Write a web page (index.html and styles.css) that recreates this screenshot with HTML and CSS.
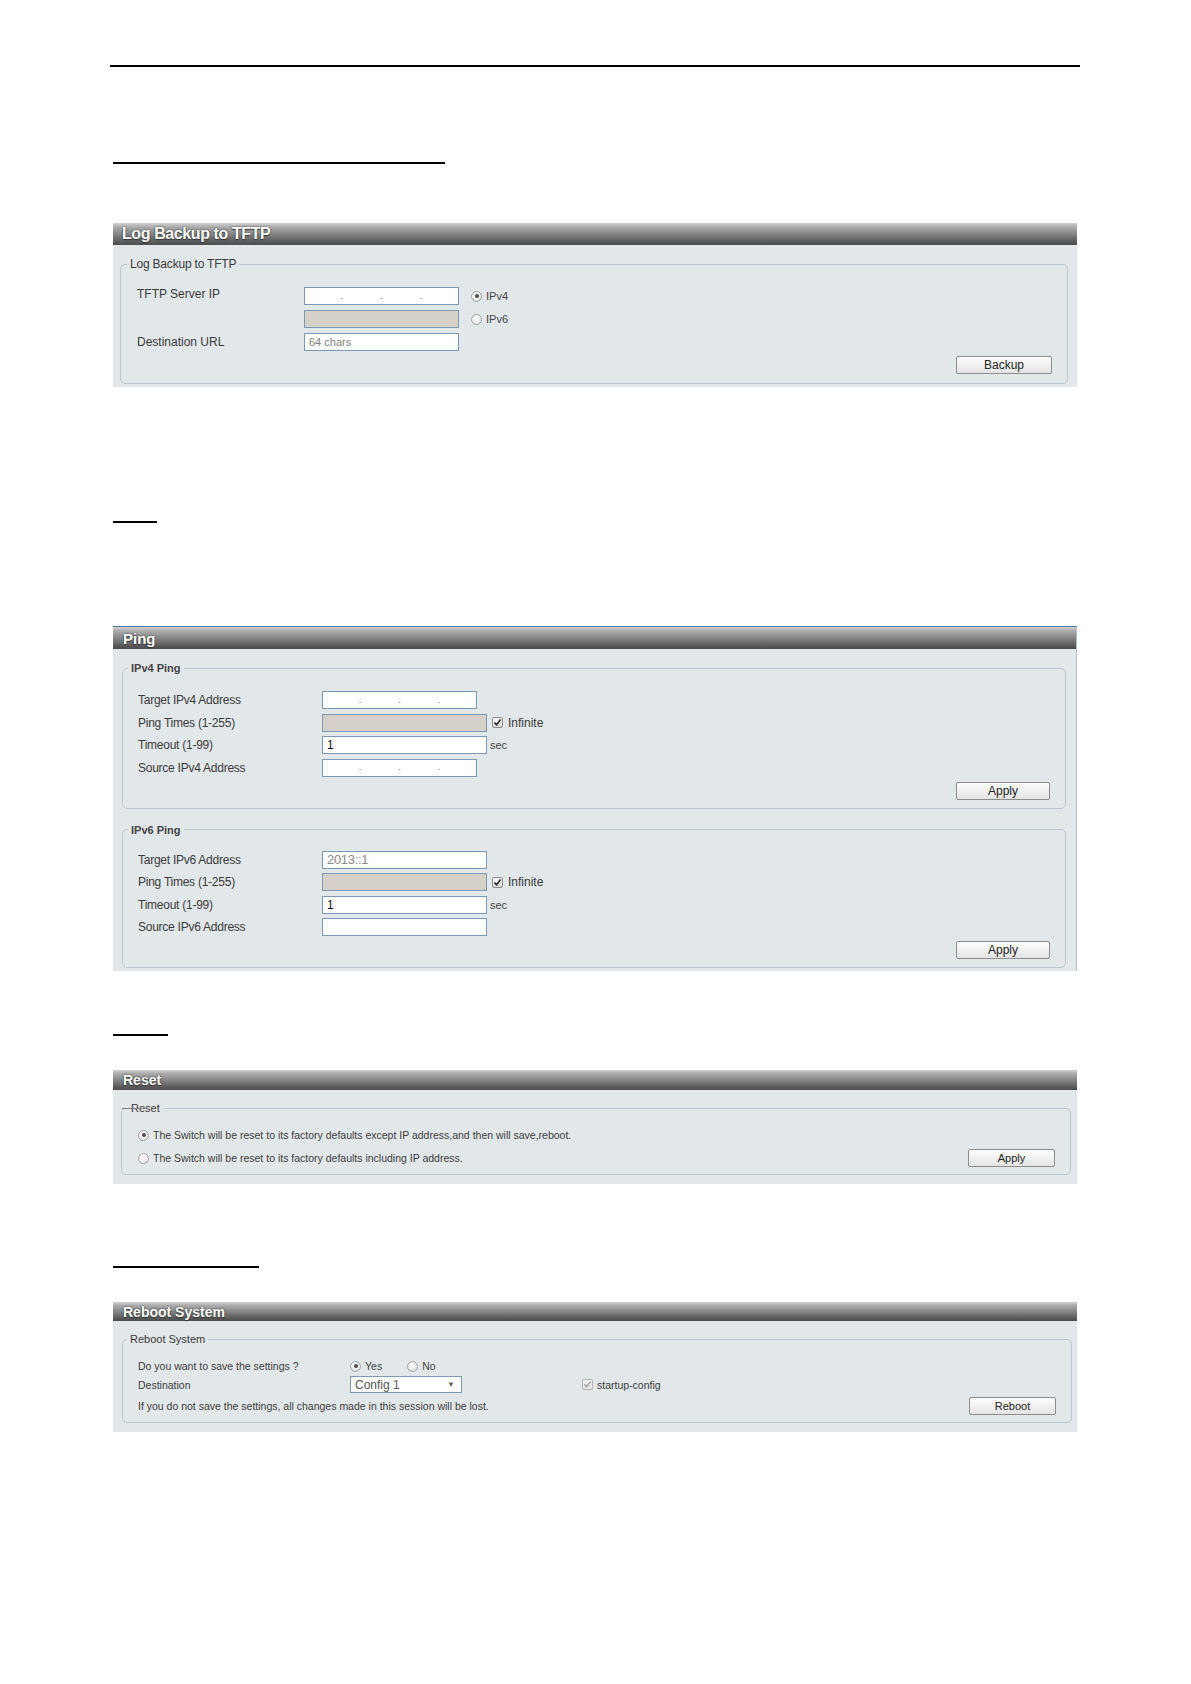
FILE: index.html
```html
<!DOCTYPE html>
<html>
<head>
<meta charset="utf-8">
<title>Tools</title>
<link rel="stylesheet" href="styles.css">
</head>
<body>
<div class="page">
  <div class="top-rule"></div>
  <div class="uline u1"></div>

  <section class="panel p-log">
    <div class="bar">Log Backup to TFTP</div>
    <div class="body">
      <fieldset>
        <legend>Log Backup to TFTP</legend>
        <div class="fs-in">
          <div class="form form-log">
            <div class="lbl lbl-up">TFTP Server IP</div>
            <div class="inp ip"><span class="seg"></span><span class="dot">.</span><span class="seg"></span><span class="dot">.</span><span class="seg"></span><span class="dot">.</span><span class="seg"></span></div>
            <div class="opt"><span class="radio on"></span>IPv4</div>
            <div></div>
            <div class="inp dis"></div>
            <div class="opt"><span class="radio"></span>IPv6</div>
            <div class="lbl">Destination URL</div>
            <div class="inp ph">64 chars</div>
            <div></div>
          </div>
          <div class="btnrow"><button class="btn btn-wide">Backup</button></div>
        </div>
      </fieldset>
    </div>
  </section>

  <div class="uline u2"></div>

  <section class="panel p-ping">
    <div class="bar">Ping</div>
    <div class="body">
      <fieldset class="fs-v4">
        <legend>IPv4 Ping</legend>
        <div class="fs-in">
          <div class="form form-ping">
            <div class="lbl">Target IPv4 Address</div>
            <div class="field"><div class="inp ip ip-short"><span class="seg"></span><span class="dot">.</span><span class="seg"></span><span class="dot">.</span><span class="seg"></span><span class="dot">.</span><span class="seg"></span></div></div>
            <div class="lbl">Ping Times (1-255)</div>
            <div class="field"><div class="inp dis long"></div><span class="check"><svg width="9" height="9" viewBox="0 0 9 9"><path d="M1.5 4.6 L3.6 6.8 L7.6 1.6" fill="none" stroke="#2b2b2b" stroke-width="1.6"/></svg></span><span class="aside">Infinite</span></div>
            <div class="lbl">Timeout (1-99)</div>
            <div class="field"><div class="inp long val">1</div><span class="unit">sec</span></div>
            <div class="lbl">Source IPv4 Address</div>
            <div class="field"><div class="inp ip ip-short"><span class="seg"></span><span class="dot">.</span><span class="seg"></span><span class="dot">.</span><span class="seg"></span><span class="dot">.</span><span class="seg"></span></div></div>
          </div>
          <div class="btnrow"><button class="btn">Apply</button></div>
        </div>
      </fieldset>

      <fieldset class="fs-v6">
        <legend>IPv6 Ping</legend>
        <div class="fs-in">
          <div class="form form-ping">
            <div class="lbl">Target IPv6 Address</div>
            <div class="field"><div class="inp long ph ph-big">2013::1</div></div>
            <div class="lbl">Ping Times (1-255)</div>
            <div class="field"><div class="inp dis long"></div><span class="check"><svg width="9" height="9" viewBox="0 0 9 9"><path d="M1.5 4.6 L3.6 6.8 L7.6 1.6" fill="none" stroke="#2b2b2b" stroke-width="1.6"/></svg></span><span class="aside">Infinite</span></div>
            <div class="lbl">Timeout (1-99)</div>
            <div class="field"><div class="inp long val">1</div><span class="unit">sec</span></div>
            <div class="lbl">Source IPv6 Address</div>
            <div class="field"><div class="inp long"></div></div>
          </div>
          <div class="btnrow"><button class="btn">Apply</button></div>
        </div>
      </fieldset>
    </div>
  </section>

  <div class="uline u3"></div>

  <section class="panel p-reset">
    <div class="bar">Reset</div>
    <div class="body">
      <fieldset>
        <legend class="struck">Reset</legend>
        <div class="fs-in">
          <div class="rrow r1"><span class="radio on"></span><span class="rtext">The Switch will be reset to its factory defaults except IP address,and then will save,reboot.</span></div>
          <div class="rrow r2"><span class="radio"></span><span class="rtext">The Switch will be reset to its factory defaults including IP address.</span><button class="btn btn-reset">Apply</button></div>
        </div>
      </fieldset>
    </div>
  </section>

  <div class="uline u4"></div>

  <section class="panel p-reboot">
    <div class="bar">Reboot System</div>
    <div class="body">
      <fieldset>
        <legend>Reboot System</legend>
        <div class="fs-in">
          <div class="brow b1">
            <span class="blbl">Do you want to save the settings ?</span>
            <span class="opt2"><span class="radio on"></span>Yes</span>
            <span class="opt2"><span class="radio"></span>No</span>
          </div>
          <div class="brow b2">
            <span class="blbl">Destination</span>
            <span class="select">Config 1<span class="arrow">&#9660;</span></span>
            <span class="check dim"><svg width="9" height="9" viewBox="0 0 9 9"><path d="M1.5 4.6 L3.6 6.8 L7.6 1.6" fill="none" stroke="#9a9a9a" stroke-width="1.4"/></svg></span>
            <span class="aside2">startup-config</span>
          </div>
          <div class="brow b3">
            <span class="note">If you do not save the settings, all changes made in this session will be lost.</span>
            <button class="btn btn-reboot">Reboot</button>
          </div>
        </div>
      </fieldset>
    </div>
  </section>
</div>
</body>
</html>
```

FILE: styles.css
```css
* { box-sizing: border-box; }
html, body { margin: 0; padding: 0; background: #fff; }
body {
  font-family: "Liberation Sans", Arial, "DejaVu Sans", sans-serif;
  color: #3a3a3a;
  width: 1191px;
  height: 1684px;
  overflow: hidden;
}
.page { padding: 65px 0 0 113px; }

.top-rule { height: 2px; width: 970px; margin-left: -3px; background: #000; }
.uline { height: 2px; background: #000; }
.u1 { width: 332px; margin-top: 95px; }
.u2 { width: 44px; margin-top: 134px; }
.u3 { width: 55px; margin-top: 63px; }
.u4 { width: 146px; margin-top: 82px; }

.panel { width: 964px; background: #e2e7ea; }
.p-log { margin-top: 59px; }
.p-ping { margin-top: 103px; border-top: 1px solid #4e759b; border-right: 1px solid #a9c2d6; }
.p-reset { margin-top: 34px; }
.p-reboot { margin-top: 34px; }

.bar {
  display: flex;
  align-items: center;
  padding-left: 10px;
  color: #fff;
  font-weight: bold;
  background: linear-gradient(#d2d2d2 0%, #acacac 18%, #808080 55%, #5a5a5a 85%, #4c4c4c 100%);
  text-shadow: 0 0 2px #3a3a3a, 0 1px 1px #333;
}
.p-log .bar { height: 22px; font-size: 16px; letter-spacing: -0.4px; padding-left: 9px; }
.p-ping .bar { height: 22px; font-size: 15px; }
.p-reset .bar { height: 20px; font-size: 14px; }
.p-reboot .bar { height: 19px; font-size: 14px; }

.p-log .body { padding: 12px 9px 3px 7px; }
.p-ping .body { padding: 12px 10px 3px 9px; }
.p-reset .body { padding: 12px 6px 9px 8px; }
.p-reboot .body { padding: 12px 5px 9px 9px; }

fieldset {
  margin: 0;
  padding: 0;
  min-width: 0;
  border: 1px solid #bcc7cf;
  border-radius: 5px;
}
legend { padding: 0 3px; margin-left: 6px; color: #3a3a3a; }
.p-log legend { font-size: 12px; line-height: 14px; letter-spacing: -0.2px; }
.p-ping legend { font-size: 11px; line-height: 14px; font-weight: bold; margin-left: 5px; color: #444; }
.p-reset legend, .p-reboot legend { font-size: 11px; line-height: 12px; }
.p-reboot legend { margin-left: 4px; }
.fs-v6 { margin-top: 14px; }

legend.struck { position: relative; margin-left: 6px; padding: 0 4px 0 3px; }
legend.struck::before {
  content: "";
  position: absolute;
  left: -6px;
  top: 6px;
  width: 22px;
  height: 1px;
  background: #7d7d7d;
}

.p-log .fs-in { padding: 16px 15px 9px 16px; }
.fs-v4 .fs-in { padding: 16px 15px 8px 15px; }
.fs-v6 .fs-in { padding: 14px 15px 8px 15px; }
.p-reset .fs-in { padding: 14px 15px 7px 16px; }
.p-reboot .fs-in { padding: 14px 15px 7px 15px; }

.form { display: grid; grid-auto-rows: 18px; align-items: center; }
.form-log { grid-template-columns: 167px 155px auto; row-gap: 5px; }
.form-ping { grid-template-columns: 184px auto; row-gap: 4.5px; }

.lbl { font-size: 12px; line-height: 14px; white-space: nowrap; }
.lbl-up { margin-top: -5px; }
.form-ping .lbl { letter-spacing: -0.25px; }

.inp {
  height: 18px;
  border: 1px solid #7b99b4;
  background: #fff;
  display: flex;
  align-items: center;
  padding-left: 4px;
  font-size: 12px;
  color: #111;
  white-space: nowrap;
}
.inp.dis { background: #d5d1c9; }
.inp.ph { color: #7f7f7f; font-size: 11px; }
.inp.ph-big { font-size: 13px; color: #8a8a8a; letter-spacing: -0.3px; }
.inp.val { font-size: 12px; }
.inp.long { width: 165px; }
.ip-short { width: 155px; }
.ip { padding-left: 0; }
.ip .seg { width: 35px; }
.ip .dot { width: 5px; text-align: center; font-size: 9px; color: #555; line-height: 9px; }

.field { display: flex; align-items: center; height: 18px; }

.opt { display: flex; align-items: center; gap: 4px; margin-left: 12px; font-size: 11px; color: #444; }
.opt2 { display: inline-flex; align-items: center; gap: 4px; font-size: 10.5px; color: #444; }

.radio {
  flex: none;
  display: inline-block;
  position: relative;
  width: 11px;
  height: 11px;
  border-radius: 50%;
  border: 1px solid #a2a2a2;
  background: radial-gradient(circle at 40% 35%, #ffffff 0%, #e6e6e6 70%, #d8d8d8 100%);
}
.radio.on::after {
  content: "";
  position: absolute;
  left: 2.5px;
  top: 2.5px;
  width: 4px;
  height: 4px;
  border-radius: 50%;
  background: #4a4a4a;
}

.check {
  flex: none;
  display: inline-flex;
  align-items: center;
  justify-content: center;
  width: 11px;
  height: 11px;
  border: 1px solid #8f8f8f;
  border-radius: 2px;
  background: linear-gradient(#f7f7f7, #dcdcdc);
  margin-left: 5px;
}
.check.dim { border-color: #b4b4b4; background: linear-gradient(#f2f2f2, #e2e2e2); }
.aside { font-size: 12px; margin-left: 5px; color: #3a3a3a; }
.unit { font-size: 11px; margin-left: 3px; color: #444; }

.btnrow { display: flex; justify-content: flex-end; margin-top: 5px; }
.btn {
  font-family: "Liberation Sans", Arial, sans-serif;
  height: 18px;
  width: 94px;
  padding: 0;
  font-size: 12px;
  line-height: 16px;
  color: #222;
  border: 1px solid #8d8d8d;
  border-radius: 2px;
  background: linear-gradient(#fdfdfd 0%, #f1f1f1 50%, #e3e3e3 100%);
}
.btn-wide { width: 96px; }

.rrow { display: flex; align-items: center; }
.r1 { height: 14px; }
.r2 { height: 18px; margin-top: 7px; }
.rtext { font-size: 10.5px; margin-left: 4px; color: #3c3c3c; white-space: nowrap; }
.btn-reset { margin-left: auto; width: 87px; font-size: 11px; }

.brow { display: flex; align-items: center; }
.b1 { height: 14px; }
.b2 { height: 17px; margin-top: 3px; }
.b3 { height: 18px; margin-top: 4px; }
.blbl { width: 212px; font-size: 10.5px; white-space: nowrap; color: #3c3c3c; }
.b1 .opt2 + .opt2 { margin-left: 25px; }
.select {
  width: 112px;
  height: 17px;
  border: 1px solid #7b99b4;
  background: #fff;
  display: flex;
  align-items: center;
  padding-left: 4px;
  font-size: 12px;
  color: #555;
  position: relative;
}
.select .arrow { position: absolute; right: 6px; top: 3px; font-size: 8px; color: #666; }
.b2 .check { margin-left: 120px; }
.aside2 { font-size: 10.5px; margin-left: 4px; color: #3c3c3c; }
.note { font-size: 10.5px; color: #3c3c3c; white-space: nowrap; }
.btn-reboot { margin-left: auto; width: 87px; font-size: 11px; }
```
